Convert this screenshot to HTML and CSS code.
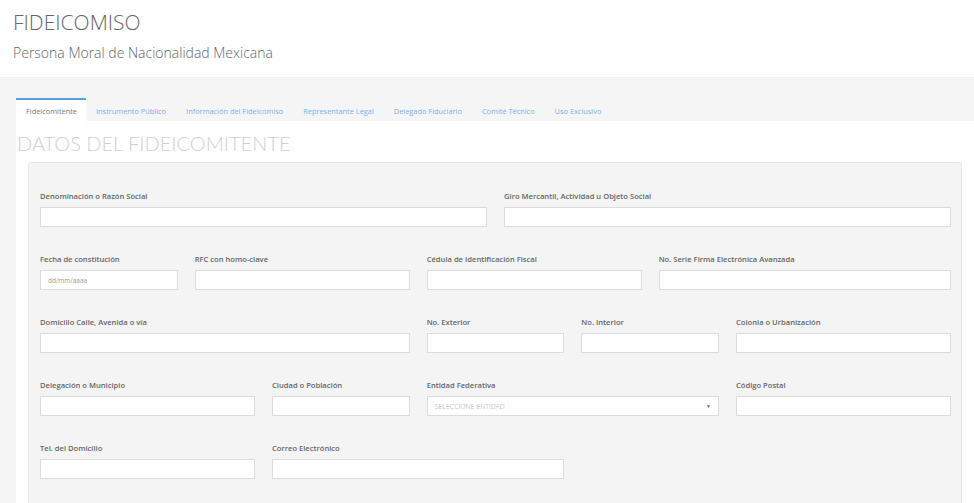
FILE: index.html
```html
<!DOCTYPE html>
<html lang="es">
<head>
<meta charset="utf-8">
<title>Fideicomiso</title>
<link rel="stylesheet" href="styles.css">
</head>
<body>
<header class="page-header">
  <h1 class="page-title">FIDEICOMISO</h1>
  <p class="page-subtitle">Persona Moral de Nacionalidad Mexicana</p>
</header>
<main class="workspace">
  <nav class="tabs">
    <a class="tab active">Fideicomitente</a>
    <a class="tab">Instrumento Público</a>
    <a class="tab">Información del Fideicomiso</a>
    <a class="tab">Representante Legal</a>
    <a class="tab">Delegado Fiduciario</a>
    <a class="tab">Comité Técnico</a>
    <a class="tab">Uso Exclusivo</a>
  </nav>
  <section class="content">
    <h2 class="section-title">DATOS DEL FIDEICOMITENTE</h2>
    <div class="panel">
      <div class="form-row">
        <div class="field span-6"><label>Denominación o Razón Social</label><input type="text"></div>
        <div class="field span-6"><label>Giro Mercantil, Actividad u Objeto Social</label><input type="text"></div>
      </div>
      <div class="form-row">
        <div class="field span-2"><label>Fecha de constitución</label><input type="text" placeholder="dd/mm/aaaa"></div>
        <div class="field span-3"><label>RFC con homo-clave</label><input type="text"></div>
        <div class="field span-3"><label>Cédula de Identificación Fiscal</label><input type="text"></div>
        <div class="field span-4"><label>No. Serie Firma Electrónica Avanzada</label><input type="text"></div>
      </div>
      <div class="form-row">
        <div class="field span-5"><label>Domicilio Calle, Avenida o vía</label><input type="text"></div>
        <div class="field span-2"><label>No. Exterior</label><input type="text"></div>
        <div class="field span-2"><label>No. Interior</label><input type="text"></div>
        <div class="field span-3"><label>Colonia o Urbanización</label><input type="text"></div>
      </div>
      <div class="form-row">
        <div class="field span-3"><label>Delegación o Municipio</label><input type="text"></div>
        <div class="field span-2"><label>Ciudad o Población</label><input type="text"></div>
        <div class="field span-4"><label>Entidad Federativa</label>
          <div class="select"><span class="select-text">SELECCIONE ENTIDAD</span><span class="select-arrow">▼</span></div>
        </div>
        <div class="field span-3"><label>Código Postal</label><input type="text"></div>
      </div>
      <div class="form-row">
        <div class="field span-3"><label>Tel. del Domicilio</label><input type="text"></div>
        <div class="field span-4"><label>Correo Electrónico</label><input type="text"></div>
      </div>
    </div>
  </section>
</main>
</body>
</html>
```
FILE: styles.css
```css
* { box-sizing: border-box; }
html, body { margin: 0; padding: 0; }
body {
  font-family: "Open Sans", "Liberation Sans", sans-serif;
  color: #555;
  background: #f5f5f5;
  height: 503px;
  overflow: hidden;
}
.page-header {
  background: #fff;
  padding: 8px 13px 0;
  height: 77px;
}
.page-title {
  margin: 0;
  font-weight: 300;
  font-size: 21px;
  line-height: 28px;
  color: #666;
}
.page-subtitle {
  margin: 7px 0 0;
  font-weight: 300;
  font-size: 14px;
  line-height: 20px;
  color: #666;
}
.workspace {
  background: #f5f5f5;
  border-top: 1px solid #ececec;
  padding: 20px 0 0 16px;
}
.tabs {
  display: flex;
  height: 23px;
}
.tab {
  display: flex;
  align-items: center;
  padding: 0 10px;
  font-size: 7.4px;
  color: #72b2ef;
  border-top: 2px solid transparent;
  white-space: nowrap;
}
.tab.active {
  background: #fff;
  color: #777;
  border-top-color: #5a9ee6;
  padding-right: 9px;
}
.content {
  background: #fff;
  padding: 10px 12px 0;
  height: 400px;
}
.section-title {
  margin: 0 0 7px -11px;
  font-family: "Lato", "Open Sans", sans-serif;
  font-weight: 300;
  font-size: 20px;
  line-height: 24px;
  color: #cfcfcf;
}
.panel {
  background: #f4f4f4;
  border: 1px solid #e6e6e6;
  border-radius: 3px;
  padding: 28px 10px 0 11px;
  height: 360px;
}
.form-row {
  display: grid;
  grid-template-columns: repeat(12, 1fr);
  column-gap: 17px;
  margin-bottom: 27px;
}
.field label {
  display: block;
  font-size: 7.6px;
  font-weight: 600;
  line-height: 11px;
  color: #666;
  margin-bottom: 5px;
  white-space: nowrap;
}
.field input,
.select {
  display: block;
  width: 100%;
  height: 20px;
  border: 1px solid #dcdcdc;
  background: #fff;
  border-radius: 0;
  margin: 0;
  padding: 0 7px;
  font-family: "Open Sans", sans-serif;
  font-size: 6.5px;
  color: #555;
}
.field input::placeholder { color: #9a9a9a; }
.select {
  display: flex;
  align-items: center;
  justify-content: space-between;
}
.select-text {
  font-size: 7px;
  font-weight: 300;
  color: #a0a0a0;
}
.select-arrow {
  font-size: 5px;
  color: #666;
}
.span-2 { grid-column: span 2; }
.span-3 { grid-column: span 3; }
.span-4 { grid-column: span 4; }
.span-5 { grid-column: span 5; }
.span-6 { grid-column: span 6; }
```
